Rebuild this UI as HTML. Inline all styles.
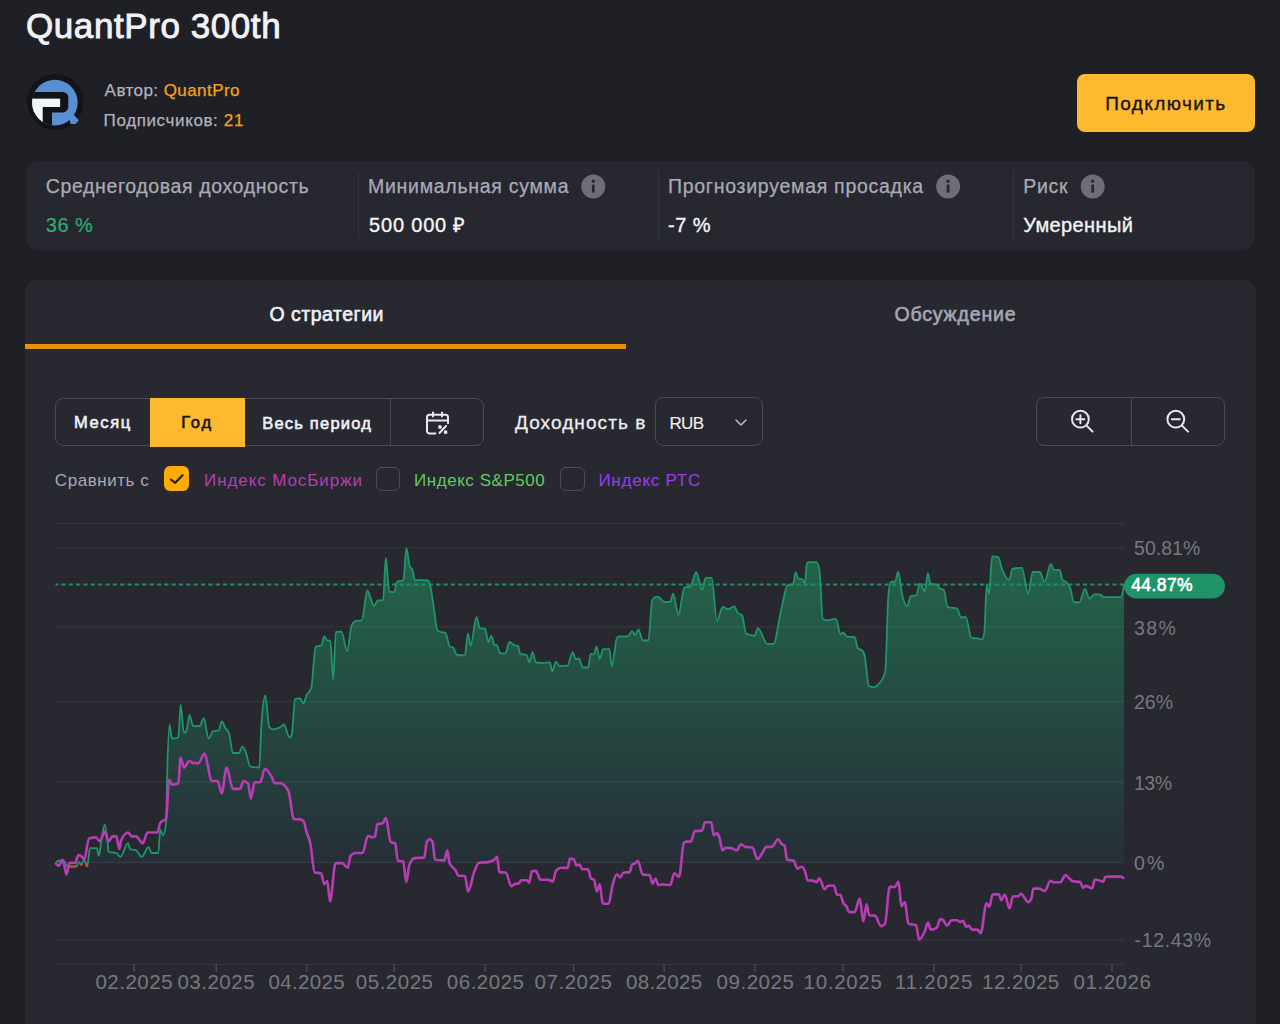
<!DOCTYPE html>
<html><head><meta charset="utf-8">
<style>
html,body{margin:0;padding:0;}
body{width:1280px;height:1024px;overflow:hidden;background:#1f2026;position:relative;font-family:"Liberation Sans",sans-serif;}
.t{position:absolute;white-space:nowrap;line-height:1;}
.abs{position:absolute;}
</style></head><body>
<!-- logo -->
<svg class="abs" style="left:0;top:0" width="110" height="140" viewBox="0 0 110 140">
  <defs><clipPath id="lc"><circle cx="54.85" cy="102.6" r="22.8"/></clipPath></defs>
  <circle cx="55.3" cy="102" r="28.2" fill="#131418"/>
  <g clip-path="url(#lc)">
    <rect x="28" y="76" width="55" height="55" fill="#5a8ed3"/>
    <path d="M28 91.9 H62.6 A5.75 5.75 0 0 1 68.35 97.65 V106.65 A5.75 5.75 0 0 1 62.6 112.4 H52 V132 H42.6 V107.1 H60.1 V98.7 H28 Z" fill="#131418"/>
    <path d="M28 98.7 H60.1 V107.1 H42.6 V132 H28 Z" fill="#f4f4f4"/>
  </g>
  <polygon points="69.5,119 73.8,114.8 78.8,120.2 75.6,124 70.5,124" fill="#5a8ed3"/>
</svg>
<!-- button -->
<div class="abs" style="left:1077px;top:73.5px;width:178px;height:58.5px;border-radius:8px;background:#ffb92e"></div>
<!-- stats card -->
<div class="abs" style="left:25.5px;top:161px;width:1229.5px;height:89px;border-radius:12px;background:#26272f"></div>
<div class="abs" style="left:357.5px;top:172px;width:1px;height:67px;background:#34353e"></div>
<div class="abs" style="left:657.5px;top:172px;width:1px;height:67px;background:#34353e"></div>
<div class="abs" style="left:1012.5px;top:172px;width:1px;height:67px;background:#34353e"></div>
<svg class="abs" style="left:0;top:0" width="1280" height="260">
  <g fill="#6e6e78"><circle cx="593.3" cy="186.6" r="12"/><circle cx="948.1" cy="186.6" r="12"/><circle cx="1092.7" cy="186.6" r="12"/></g>
  <g fill="#26272f">
   <circle cx="593.3" cy="181.2" r="1.6"/><rect x="591.9" y="184.4" width="2.8" height="8.4" rx="1"/>
   <circle cx="948.1" cy="181.2" r="1.6"/><rect x="946.7" y="184.4" width="2.8" height="8.4" rx="1"/>
   <circle cx="1092.7" cy="181.2" r="1.6"/><rect x="1091.3" y="184.4" width="2.8" height="8.4" rx="1"/>
  </g>
</svg>
<!-- main card -->
<div class="abs" style="left:25px;top:280px;width:1230.5px;height:760px;border-radius:12px;background:#272830"></div>
<div class="abs" style="left:25px;top:344px;width:601px;height:5px;background:#e8900c"></div>
<!-- segmented -->
<div class="abs" style="left:55px;top:398px;width:429px;height:48px;border:1px solid #4a4b55;border-radius:8px;box-sizing:border-box"></div>
<div class="abs" style="left:150px;top:398px;width:94.5px;height:49px;background:#ffb92e"></div>
<div class="abs" style="left:390px;top:398px;width:1px;height:48px;background:#4a4b55"></div>
<svg class="abs" style="left:420px;top:405px" width="36" height="36" viewBox="420 405 36 36" fill="none" stroke="#e8e8ee" stroke-width="2" stroke-linecap="round" stroke-linejoin="round">
  <path d="M435.3 433.5 H429.5 a2.5 2.5 0 0 1 -2.5 -2.5 V417.3 a2.5 2.5 0 0 1 2.5 -2.5 H445.5 a2.5 2.5 0 0 1 2.5 2.5 V423.3"/>
  <path d="M433 412.5 V416.5 M442 412.5 V416.5 M427 420.5 H448"/>
  <path d="M439.5 433 L446 426"/>
  <circle cx="440" cy="427" r="0.9" fill="#e8e8ee"/><circle cx="445.6" cy="432.2" r="0.9" fill="#e8e8ee"/>
</svg>
<!-- RUB dropdown -->
<div class="abs" style="left:655px;top:397px;width:108px;height:49px;border:1px solid #4a4b55;border-radius:8px;box-sizing:border-box"></div>
<svg class="abs" style="left:730px;top:412px" width="22" height="20" viewBox="730 412 22 20" fill="none" stroke="#b8b8c0" stroke-width="1.6" stroke-linecap="round" stroke-linejoin="round"><path d="M736 420 L741 425 L746 420"/></svg>
<!-- zoom buttons -->
<div class="abs" style="left:1036px;top:397px;width:189px;height:49px;border:1px solid #4a4b55;border-radius:8px;box-sizing:border-box"></div>
<div class="abs" style="left:1131px;top:397px;width:1px;height:49px;background:#4a4b55"></div>
<svg class="abs" style="left:1060px;top:400px" width="140" height="40" viewBox="1060 400 140 40" fill="none" stroke="#e8e8ee" stroke-width="2" stroke-linecap="round">
  <circle cx="1080.4" cy="419.2" r="8.4"/><path d="M1086.6 425.6 L1092.6 431.6 M1076.4 419.2 H1084.4 M1080.4 415.2 V423.2"/>
  <circle cx="1175.8" cy="419.2" r="8.4"/><path d="M1182 425.6 L1188 431.6 M1171.8 419.2 H1179.8"/>
</svg>
<!-- checkboxes -->
<div class="abs" style="left:164px;top:466px;width:25px;height:25px;border-radius:6px;background:#ffab00"></div>
<svg class="abs" style="left:164px;top:466px" width="25" height="25" viewBox="164 466 25 25" fill="none" stroke="#2a2108" stroke-width="2.2" stroke-linecap="round" stroke-linejoin="round"><path d="M171 479.6 L175.2 482.8 L182.6 475.2"/></svg>
<div class="abs" style="left:375.5px;top:466.5px;width:24.5px;height:24.5px;border:1.6px solid #4d4e57;border-radius:6px;box-sizing:border-box"></div>
<div class="abs" style="left:560px;top:466.5px;width:24.5px;height:24.5px;border:1.6px solid #4d4e57;border-radius:6px;box-sizing:border-box"></div>
<!-- chart -->
<svg class="abs" style="left:0;top:0" width="1280" height="1024">
  <defs>
   <linearGradient id="gf" x1="0" y1="548" x2="0" y2="862.5" gradientUnits="userSpaceOnUse">
     <stop offset="0" stop-color="#23664c"/>
     <stop offset="1" stop-color="#262f37"/>
   </linearGradient>
  </defs>
  <path d="M55.90 861.80 C57.83 861.27 59.77 860.20 61.70 860.20 C62.67 860.20 63.63 860.77 64.60 861.80 C65.60 862.87 66.60 866.60 67.60 866.60 C70.53 866.60 73.47 866.60 76.40 866.60 C77.37 866.60 78.33 861.80 79.30 861.80 C79.93 861.80 80.57 864.70 81.20 864.70 C82.20 864.70 83.20 859.80 84.20 859.80 C85.17 859.80 86.13 866.70 87.10 866.70 C88.07 866.70 89.03 848.10 90.00 848.10 C92.27 848.10 94.53 848.10 96.80 848.10 C97.47 848.10 98.13 855.90 98.80 855.90 C99.77 855.90 100.73 843.54 101.70 838.40 C102.70 833.09 103.70 824.70 104.70 824.70 C105.67 824.70 106.63 833.82 107.60 842.30 C107.93 845.22 108.27 851.91 108.60 852.00 C111.20 852.67 113.80 852.33 116.40 853.00 C117.70 853.33 119.00 856.90 120.30 856.90 C122.90 856.90 125.50 843.20 128.10 843.20 C128.73 843.20 129.37 848.89 130.00 849.10 C131.97 849.77 133.93 849.43 135.90 850.10 C137.83 850.76 139.77 856.90 141.70 856.90 C144.00 856.90 146.30 847.10 148.60 847.10 C149.57 847.10 150.53 853.00 151.50 853.00 C153.77 853.00 156.03 853.00 158.30 853.00 C158.97 853.00 159.63 829.60 160.30 829.60 C161.27 829.60 162.23 835.40 163.20 835.40 C164.17 835.40 165.13 831.17 166.10 822.70 C166.43 819.78 166.77 790.53 167.10 777.80 C167.90 747.24 168.70 724.70 169.50 724.70 C170.33 724.70 171.17 738.80 172.00 738.80 C174.13 738.80 176.27 738.30 178.40 737.30 C179.13 736.96 179.87 704.70 180.60 704.70 C181.73 704.70 182.87 732.80 184.00 732.80 C184.73 732.80 185.47 732.40 186.20 731.60 C187.33 730.36 188.47 714.80 189.60 714.80 C190.73 714.80 191.87 726.00 193.00 726.00 C195.23 726.00 197.47 726.00 199.70 726.00 C201.03 726.00 202.37 718.20 203.70 718.20 C205.37 718.20 207.03 738.40 208.70 738.40 C210.20 738.40 211.70 731.58 213.20 731.20 C215.07 730.73 216.93 730.97 218.80 730.50 C219.77 730.26 220.73 721.50 221.70 721.50 C222.97 721.50 224.23 726.34 225.50 728.30 C226.63 730.05 227.77 729.80 228.90 732.80 C230.23 736.33 231.57 753.00 232.90 753.00 C234.93 753.00 236.97 753.00 239.00 753.00 C240.13 753.00 241.27 746.70 242.40 746.70 C243.50 746.70 244.60 749.31 245.70 751.80 C247.20 755.20 248.70 766.00 250.20 766.40 C253.20 767.20 256.20 767.60 259.20 767.60 C259.93 767.60 260.67 736.01 261.40 724.90 C262.70 705.21 264.00 695.30 265.30 695.30 C266.63 695.30 267.97 725.74 269.30 727.10 C270.80 728.63 272.30 729.40 273.80 729.40 C276.03 729.40 278.27 728.49 280.50 727.10 C281.63 726.39 282.77 724.50 283.90 724.50 C285.77 724.50 287.63 737.30 289.50 737.30 C290.23 737.30 290.97 736.53 291.70 735.00 C292.83 732.63 293.97 699.47 295.10 699.10 C296.73 698.57 298.37 698.30 300.00 698.30 C301.13 698.30 302.27 703.40 303.40 703.40 C304.50 703.40 305.60 697.23 306.70 694.90 C308.20 691.73 309.70 692.67 311.20 688.20 C312.70 683.73 314.20 647.19 315.70 646.60 C317.57 645.87 319.43 646.23 321.30 645.50 C322.27 645.12 323.23 636.50 324.20 636.50 C325.10 636.50 326.00 639.32 326.90 639.90 C328.03 640.63 329.17 640.27 330.30 641.00 C331.27 641.63 332.23 679.20 333.20 679.20 C334.10 679.20 335.00 632.13 335.90 632.00 C337.77 631.73 339.63 631.60 341.50 631.60 C343.37 631.60 345.23 651.10 347.10 651.10 C348.60 651.10 350.10 628.30 351.60 625.30 C353.10 622.30 354.60 621.01 356.10 620.80 C357.97 620.53 359.83 620.67 361.70 620.40 C363.60 620.13 365.50 590.50 367.40 590.50 C368.50 590.50 369.60 595.82 370.70 598.40 C371.83 601.06 372.97 606.20 374.10 606.20 C375.23 606.20 376.37 600.76 377.50 600.60 C379.37 600.33 381.23 600.47 383.10 600.20 C384.00 600.07 384.90 558.00 385.80 558.00 C387.00 558.00 388.20 591.36 389.40 591.60 C391.03 591.93 392.67 592.10 394.30 592.10 C395.20 592.10 396.10 581.81 397.00 581.50 C399.10 580.77 401.20 581.13 403.30 580.40 C404.33 580.04 405.37 548.50 406.40 548.50 C407.60 548.50 408.80 564.50 410.00 566.90 C410.77 568.43 411.53 567.67 412.30 569.20 C413.20 571.00 414.10 579.94 415.00 580.00 C419.33 580.27 423.67 580.13 428.00 580.40 C428.57 580.43 429.13 581.64 429.70 583.40 C430.73 586.61 431.77 594.55 432.80 600.60 C434.37 609.77 435.93 628.68 437.50 630.30 C438.53 631.37 439.57 631.55 440.60 631.90 C442.17 632.43 443.73 632.17 445.30 632.70 C446.87 633.23 448.43 645.89 450.00 646.70 C451.03 647.23 452.07 646.97 453.10 647.50 C454.40 648.17 455.70 654.90 457.00 655.00 C459.60 655.20 462.20 655.30 464.80 655.30 C465.87 655.30 466.93 633.40 468.00 633.40 C468.87 633.40 469.73 645.90 470.60 645.90 C472.60 645.90 474.60 617.00 476.60 617.00 C477.63 617.00 478.67 627.70 479.70 628.00 C481.53 628.53 483.37 628.27 485.20 628.80 C486.23 629.10 487.27 642.00 488.30 642.00 C489.33 642.00 490.37 635.80 491.40 635.80 C492.43 635.80 493.47 645.20 494.50 645.20 C495.30 645.20 496.10 645.20 496.90 645.20 C497.93 645.20 498.97 653.40 500.00 653.40 C501.83 653.40 503.67 653.40 505.50 653.40 C506.80 653.40 508.10 642.00 509.40 642.00 C510.97 642.00 512.53 644.64 514.10 645.20 C515.40 645.67 516.70 645.43 518.00 645.90 C518.77 646.18 519.53 653.51 520.30 653.80 C522.40 654.60 524.50 654.20 526.60 655.00 C527.53 655.36 528.47 662.30 529.40 662.30 C530.43 662.30 531.47 652.20 532.50 652.20 C533.63 652.20 534.77 662.12 535.90 662.30 C538.00 662.63 540.10 662.80 542.20 662.80 C544.80 662.80 547.40 662.30 550.00 662.30 C550.77 662.30 551.53 671.50 552.30 671.50 C553.50 671.50 554.70 661.60 555.90 661.60 C557.07 661.60 558.23 665.90 559.40 665.90 C562.00 665.90 564.60 665.90 567.20 665.90 C569.03 665.90 570.87 652.20 572.70 652.20 C573.73 652.20 574.77 659.20 575.80 659.20 C576.83 659.20 577.87 658.40 578.90 658.40 C580.20 658.40 581.50 667.50 582.80 667.50 C584.63 667.50 586.47 667.50 588.30 667.50 C589.07 667.50 589.83 653.80 590.60 653.80 C591.67 653.80 592.73 654.50 593.80 654.50 C594.73 654.50 595.67 646.70 596.60 646.70 C597.63 646.70 598.67 659.20 599.70 659.20 C600.83 659.20 601.97 649.10 603.10 649.10 C605.20 649.10 607.30 649.10 609.40 649.10 C610.17 649.10 610.93 666.30 611.70 666.30 C613.53 666.30 615.37 638.48 617.20 637.30 C618.23 636.63 619.27 636.30 620.30 636.30 C622.90 636.30 625.50 636.30 628.10 636.30 C629.40 636.30 630.70 631.10 632.00 631.10 C633.07 631.10 634.13 635.00 635.20 635.00 C636.23 635.00 637.27 629.50 638.30 629.50 C639.87 629.50 641.43 640.50 643.00 640.50 C644.80 640.50 646.60 640.50 648.40 640.50 C649.70 640.50 651.00 601.51 652.30 599.80 C653.87 597.73 655.43 596.70 657.00 596.70 C658.07 596.70 659.13 597.56 660.20 598.30 C661.50 599.20 662.80 601.90 664.10 601.90 C666.17 601.90 668.23 601.90 670.30 601.90 C671.23 601.90 672.17 593.60 673.10 593.60 C674.87 593.60 676.63 614.80 678.40 614.80 C680.40 614.80 682.40 588.27 684.40 587.50 C686.47 586.70 688.53 587.10 690.60 586.30 C692.43 585.59 694.27 572.20 696.10 572.20 C698.17 572.20 700.23 589.80 702.30 589.80 C703.37 589.80 704.43 577.80 705.50 577.80 C707.57 577.80 709.63 577.80 711.70 577.80 C713.43 577.80 715.17 621.10 716.90 621.10 C718.83 621.10 720.77 607.00 722.70 607.00 C724.50 607.00 726.30 609.10 728.10 609.10 C730.20 609.10 732.30 606.30 734.40 606.30 C735.43 606.30 736.47 611.14 737.50 612.50 C739.07 614.57 740.63 613.53 742.20 615.60 C743.50 617.31 744.80 633.00 746.10 633.60 C748.97 634.93 751.83 635.60 754.70 635.60 C755.73 635.60 756.77 628.10 757.80 628.10 C760.93 628.10 764.07 643.80 767.20 643.80 C769.27 643.80 771.33 643.80 773.40 643.80 C776.03 643.80 778.67 620.20 781.30 609.40 C783.37 600.92 785.43 585.80 787.50 585.20 C789.33 584.67 791.17 584.93 793.00 584.40 C793.87 584.15 794.73 572.20 795.60 572.20 C796.53 572.20 797.47 578.90 798.40 578.90 C799.57 578.90 800.73 578.90 801.90 578.90 C802.83 578.90 803.77 583.60 804.70 583.60 C805.47 583.60 806.23 564.00 807.00 563.30 C807.80 562.57 808.60 562.20 809.40 562.20 C811.73 562.20 814.07 562.20 816.40 562.20 C817.43 562.20 818.47 564.90 819.50 570.30 C820.57 575.87 821.63 617.98 822.70 618.80 C824.00 619.80 825.30 620.30 826.60 620.30 C829.70 620.30 832.80 618.80 835.90 618.80 C837.47 618.80 839.03 634.40 840.60 634.40 C841.40 634.40 842.20 632.50 843.00 632.50 C844.30 632.50 845.60 636.53 846.90 636.70 C849.50 637.03 852.10 636.87 854.70 637.20 C855.73 637.33 856.77 646.91 857.80 648.10 C859.37 649.90 860.93 649.00 862.50 650.80 C863.27 651.68 864.03 653.06 864.80 656.30 C866.13 661.93 867.47 685.15 868.80 685.90 C870.33 686.77 871.87 687.20 873.40 687.20 C875.50 687.20 877.60 685.71 879.70 682.80 C881.53 680.26 883.37 679.17 885.20 671.90 C886.23 667.80 887.27 610.29 888.30 596.90 C889.07 586.97 889.83 582.23 890.60 582.00 C892.17 581.53 893.73 581.77 895.30 581.30 C896.23 581.02 897.17 571.90 898.10 571.90 C899.50 571.90 900.90 589.63 902.30 595.30 C903.87 601.64 905.43 606.30 907.00 606.30 C908.30 606.30 909.60 596.48 910.90 596.10 C912.73 595.57 914.57 595.83 916.40 595.30 C917.43 595.00 918.47 583.60 919.50 583.60 C921.33 583.60 923.17 590.90 925.00 590.90 C925.93 590.90 926.87 573.10 927.80 573.10 C928.70 573.10 929.60 583.53 930.50 583.75 C932.57 584.25 934.63 584.00 936.70 584.50 C937.73 584.75 938.77 587.72 939.80 588.40 C941.12 589.27 942.43 588.83 943.75 589.70 C945.07 590.57 946.38 606.86 947.70 607.20 C950.80 608.00 953.90 607.60 957.00 608.40 C958.30 608.74 959.60 617.30 960.90 617.30 C962.47 617.30 964.03 616.90 965.60 616.90 C967.60 616.90 969.60 637.92 971.60 638.10 C973.77 638.30 975.93 638.20 978.10 638.40 C979.40 638.52 980.70 639.70 982.00 639.70 C982.80 639.70 983.60 637.20 984.40 632.20 C985.17 627.41 985.93 584.50 986.70 584.50 C987.50 584.50 988.30 593.90 989.10 593.90 C990.13 593.90 991.17 556.40 992.20 556.40 C994.27 556.40 996.33 556.67 998.40 557.20 C999.47 557.48 1000.53 564.81 1001.60 567.80 C1004.10 574.80 1006.60 579.80 1009.10 579.80 C1010.23 579.80 1011.37 569.17 1012.50 568.90 C1015.63 568.17 1018.77 567.80 1021.90 567.80 C1023.97 567.80 1026.03 593.90 1028.10 593.90 C1029.67 593.90 1031.23 572.00 1032.80 572.00 C1035.13 572.00 1037.47 572.00 1039.80 572.00 C1041.37 572.00 1042.93 581.90 1044.50 581.90 C1046.63 581.90 1048.77 563.90 1050.90 563.90 C1051.87 563.90 1052.83 569.80 1053.80 569.80 C1055.73 569.80 1057.67 569.80 1059.60 569.80 C1060.60 569.80 1061.60 578.82 1062.60 580.00 C1063.73 581.33 1064.87 580.86 1066.00 582.00 C1067.47 583.47 1068.93 584.60 1070.40 588.80 C1071.53 592.05 1072.67 601.79 1073.80 602.00 C1075.60 602.33 1077.40 602.50 1079.20 602.50 C1081.13 602.50 1083.07 588.80 1085.00 588.80 C1086.47 588.80 1087.93 598.60 1089.40 598.60 C1091.20 598.60 1093.00 594.20 1094.80 594.20 C1096.77 594.20 1098.73 594.37 1100.70 594.70 C1101.67 594.86 1102.63 597.10 1103.60 597.10 C1109.47 597.10 1115.33 597.10 1121.20 597.10 C1122.17 597.10 1123.13 589.03 1124.10 585.00 L1124.1 862.5 L55.9 862.5 Z" fill="url(#gf)"/>
  <g stroke="#ffffff" stroke-opacity="0.065" stroke-width="1.3"><line x1="55.5" x2="1124" y1="523.3" y2="523.3" /><line x1="55.5" x2="1124" y1="547.7" y2="547.7" /><line x1="55.5" x2="1124" y1="626.8" y2="626.8" /><line x1="55.5" x2="1124" y1="701.6" y2="701.6" /><line x1="55.5" x2="1124" y1="782.2" y2="782.2" /><line x1="55.5" x2="1124" y1="862.5" y2="862.5" /><line x1="55.5" x2="1124" y1="939.8" y2="939.8" /><line x1="55.5" x2="1124" y1="964.3" y2="964.3"/></g><g stroke="#4b4c55" stroke-width="1.3"><line x1="134.2" x2="134.2" y1="964" y2="972" /><line x1="216.2" x2="216.2" y1="964" y2="972" /><line x1="306.7" x2="306.7" y1="964" y2="972" /><line x1="394.3" x2="394.3" y1="964" y2="972" /><line x1="485.3" x2="485.3" y1="964" y2="972" /><line x1="573.5" x2="573.5" y1="964" y2="972" /><line x1="664.1" x2="664.1" y1="964" y2="972" /><line x1="755.0" x2="755.0" y1="964" y2="972" /><line x1="843.0" x2="843.0" y1="964" y2="972" /><line x1="933.8" x2="933.8" y1="964" y2="972" /><line x1="1021.1" x2="1021.1" y1="964" y2="972" /><line x1="1112.0" x2="1112.0" y1="964" y2="972" /></g>
  <line x1="55.5" x2="1124" y1="584.6" y2="584.6" stroke="#1f8e64" stroke-width="2" stroke-dasharray="4.3 3.05" stroke-dashoffset="1.6"/>
  <path d="M55.90 861.80 C57.83 861.27 59.77 860.20 61.70 860.20 C62.67 860.20 63.63 860.77 64.60 861.80 C65.60 862.87 66.60 866.60 67.60 866.60 C70.53 866.60 73.47 866.60 76.40 866.60 C77.37 866.60 78.33 861.80 79.30 861.80 C79.93 861.80 80.57 864.70 81.20 864.70 C82.20 864.70 83.20 859.80 84.20 859.80 C85.17 859.80 86.13 866.70 87.10 866.70 C88.07 866.70 89.03 848.10 90.00 848.10 C92.27 848.10 94.53 848.10 96.80 848.10 C97.47 848.10 98.13 855.90 98.80 855.90 C99.77 855.90 100.73 843.54 101.70 838.40 C102.70 833.09 103.70 824.70 104.70 824.70 C105.67 824.70 106.63 833.82 107.60 842.30 C107.93 845.22 108.27 851.91 108.60 852.00 C111.20 852.67 113.80 852.33 116.40 853.00 C117.70 853.33 119.00 856.90 120.30 856.90 C122.90 856.90 125.50 843.20 128.10 843.20 C128.73 843.20 129.37 848.89 130.00 849.10 C131.97 849.77 133.93 849.43 135.90 850.10 C137.83 850.76 139.77 856.90 141.70 856.90 C144.00 856.90 146.30 847.10 148.60 847.10 C149.57 847.10 150.53 853.00 151.50 853.00 C153.77 853.00 156.03 853.00 158.30 853.00 C158.97 853.00 159.63 829.60 160.30 829.60 C161.27 829.60 162.23 835.40 163.20 835.40 C164.17 835.40 165.13 831.17 166.10 822.70 C166.43 819.78 166.77 790.53 167.10 777.80 C167.90 747.24 168.70 724.70 169.50 724.70 C170.33 724.70 171.17 738.80 172.00 738.80 C174.13 738.80 176.27 738.30 178.40 737.30 C179.13 736.96 179.87 704.70 180.60 704.70 C181.73 704.70 182.87 732.80 184.00 732.80 C184.73 732.80 185.47 732.40 186.20 731.60 C187.33 730.36 188.47 714.80 189.60 714.80 C190.73 714.80 191.87 726.00 193.00 726.00 C195.23 726.00 197.47 726.00 199.70 726.00 C201.03 726.00 202.37 718.20 203.70 718.20 C205.37 718.20 207.03 738.40 208.70 738.40 C210.20 738.40 211.70 731.58 213.20 731.20 C215.07 730.73 216.93 730.97 218.80 730.50 C219.77 730.26 220.73 721.50 221.70 721.50 C222.97 721.50 224.23 726.34 225.50 728.30 C226.63 730.05 227.77 729.80 228.90 732.80 C230.23 736.33 231.57 753.00 232.90 753.00 C234.93 753.00 236.97 753.00 239.00 753.00 C240.13 753.00 241.27 746.70 242.40 746.70 C243.50 746.70 244.60 749.31 245.70 751.80 C247.20 755.20 248.70 766.00 250.20 766.40 C253.20 767.20 256.20 767.60 259.20 767.60 C259.93 767.60 260.67 736.01 261.40 724.90 C262.70 705.21 264.00 695.30 265.30 695.30 C266.63 695.30 267.97 725.74 269.30 727.10 C270.80 728.63 272.30 729.40 273.80 729.40 C276.03 729.40 278.27 728.49 280.50 727.10 C281.63 726.39 282.77 724.50 283.90 724.50 C285.77 724.50 287.63 737.30 289.50 737.30 C290.23 737.30 290.97 736.53 291.70 735.00 C292.83 732.63 293.97 699.47 295.10 699.10 C296.73 698.57 298.37 698.30 300.00 698.30 C301.13 698.30 302.27 703.40 303.40 703.40 C304.50 703.40 305.60 697.23 306.70 694.90 C308.20 691.73 309.70 692.67 311.20 688.20 C312.70 683.73 314.20 647.19 315.70 646.60 C317.57 645.87 319.43 646.23 321.30 645.50 C322.27 645.12 323.23 636.50 324.20 636.50 C325.10 636.50 326.00 639.32 326.90 639.90 C328.03 640.63 329.17 640.27 330.30 641.00 C331.27 641.63 332.23 679.20 333.20 679.20 C334.10 679.20 335.00 632.13 335.90 632.00 C337.77 631.73 339.63 631.60 341.50 631.60 C343.37 631.60 345.23 651.10 347.10 651.10 C348.60 651.10 350.10 628.30 351.60 625.30 C353.10 622.30 354.60 621.01 356.10 620.80 C357.97 620.53 359.83 620.67 361.70 620.40 C363.60 620.13 365.50 590.50 367.40 590.50 C368.50 590.50 369.60 595.82 370.70 598.40 C371.83 601.06 372.97 606.20 374.10 606.20 C375.23 606.20 376.37 600.76 377.50 600.60 C379.37 600.33 381.23 600.47 383.10 600.20 C384.00 600.07 384.90 558.00 385.80 558.00 C387.00 558.00 388.20 591.36 389.40 591.60 C391.03 591.93 392.67 592.10 394.30 592.10 C395.20 592.10 396.10 581.81 397.00 581.50 C399.10 580.77 401.20 581.13 403.30 580.40 C404.33 580.04 405.37 548.50 406.40 548.50 C407.60 548.50 408.80 564.50 410.00 566.90 C410.77 568.43 411.53 567.67 412.30 569.20 C413.20 571.00 414.10 579.94 415.00 580.00 C419.33 580.27 423.67 580.13 428.00 580.40 C428.57 580.43 429.13 581.64 429.70 583.40 C430.73 586.61 431.77 594.55 432.80 600.60 C434.37 609.77 435.93 628.68 437.50 630.30 C438.53 631.37 439.57 631.55 440.60 631.90 C442.17 632.43 443.73 632.17 445.30 632.70 C446.87 633.23 448.43 645.89 450.00 646.70 C451.03 647.23 452.07 646.97 453.10 647.50 C454.40 648.17 455.70 654.90 457.00 655.00 C459.60 655.20 462.20 655.30 464.80 655.30 C465.87 655.30 466.93 633.40 468.00 633.40 C468.87 633.40 469.73 645.90 470.60 645.90 C472.60 645.90 474.60 617.00 476.60 617.00 C477.63 617.00 478.67 627.70 479.70 628.00 C481.53 628.53 483.37 628.27 485.20 628.80 C486.23 629.10 487.27 642.00 488.30 642.00 C489.33 642.00 490.37 635.80 491.40 635.80 C492.43 635.80 493.47 645.20 494.50 645.20 C495.30 645.20 496.10 645.20 496.90 645.20 C497.93 645.20 498.97 653.40 500.00 653.40 C501.83 653.40 503.67 653.40 505.50 653.40 C506.80 653.40 508.10 642.00 509.40 642.00 C510.97 642.00 512.53 644.64 514.10 645.20 C515.40 645.67 516.70 645.43 518.00 645.90 C518.77 646.18 519.53 653.51 520.30 653.80 C522.40 654.60 524.50 654.20 526.60 655.00 C527.53 655.36 528.47 662.30 529.40 662.30 C530.43 662.30 531.47 652.20 532.50 652.20 C533.63 652.20 534.77 662.12 535.90 662.30 C538.00 662.63 540.10 662.80 542.20 662.80 C544.80 662.80 547.40 662.30 550.00 662.30 C550.77 662.30 551.53 671.50 552.30 671.50 C553.50 671.50 554.70 661.60 555.90 661.60 C557.07 661.60 558.23 665.90 559.40 665.90 C562.00 665.90 564.60 665.90 567.20 665.90 C569.03 665.90 570.87 652.20 572.70 652.20 C573.73 652.20 574.77 659.20 575.80 659.20 C576.83 659.20 577.87 658.40 578.90 658.40 C580.20 658.40 581.50 667.50 582.80 667.50 C584.63 667.50 586.47 667.50 588.30 667.50 C589.07 667.50 589.83 653.80 590.60 653.80 C591.67 653.80 592.73 654.50 593.80 654.50 C594.73 654.50 595.67 646.70 596.60 646.70 C597.63 646.70 598.67 659.20 599.70 659.20 C600.83 659.20 601.97 649.10 603.10 649.10 C605.20 649.10 607.30 649.10 609.40 649.10 C610.17 649.10 610.93 666.30 611.70 666.30 C613.53 666.30 615.37 638.48 617.20 637.30 C618.23 636.63 619.27 636.30 620.30 636.30 C622.90 636.30 625.50 636.30 628.10 636.30 C629.40 636.30 630.70 631.10 632.00 631.10 C633.07 631.10 634.13 635.00 635.20 635.00 C636.23 635.00 637.27 629.50 638.30 629.50 C639.87 629.50 641.43 640.50 643.00 640.50 C644.80 640.50 646.60 640.50 648.40 640.50 C649.70 640.50 651.00 601.51 652.30 599.80 C653.87 597.73 655.43 596.70 657.00 596.70 C658.07 596.70 659.13 597.56 660.20 598.30 C661.50 599.20 662.80 601.90 664.10 601.90 C666.17 601.90 668.23 601.90 670.30 601.90 C671.23 601.90 672.17 593.60 673.10 593.60 C674.87 593.60 676.63 614.80 678.40 614.80 C680.40 614.80 682.40 588.27 684.40 587.50 C686.47 586.70 688.53 587.10 690.60 586.30 C692.43 585.59 694.27 572.20 696.10 572.20 C698.17 572.20 700.23 589.80 702.30 589.80 C703.37 589.80 704.43 577.80 705.50 577.80 C707.57 577.80 709.63 577.80 711.70 577.80 C713.43 577.80 715.17 621.10 716.90 621.10 C718.83 621.10 720.77 607.00 722.70 607.00 C724.50 607.00 726.30 609.10 728.10 609.10 C730.20 609.10 732.30 606.30 734.40 606.30 C735.43 606.30 736.47 611.14 737.50 612.50 C739.07 614.57 740.63 613.53 742.20 615.60 C743.50 617.31 744.80 633.00 746.10 633.60 C748.97 634.93 751.83 635.60 754.70 635.60 C755.73 635.60 756.77 628.10 757.80 628.10 C760.93 628.10 764.07 643.80 767.20 643.80 C769.27 643.80 771.33 643.80 773.40 643.80 C776.03 643.80 778.67 620.20 781.30 609.40 C783.37 600.92 785.43 585.80 787.50 585.20 C789.33 584.67 791.17 584.93 793.00 584.40 C793.87 584.15 794.73 572.20 795.60 572.20 C796.53 572.20 797.47 578.90 798.40 578.90 C799.57 578.90 800.73 578.90 801.90 578.90 C802.83 578.90 803.77 583.60 804.70 583.60 C805.47 583.60 806.23 564.00 807.00 563.30 C807.80 562.57 808.60 562.20 809.40 562.20 C811.73 562.20 814.07 562.20 816.40 562.20 C817.43 562.20 818.47 564.90 819.50 570.30 C820.57 575.87 821.63 617.98 822.70 618.80 C824.00 619.80 825.30 620.30 826.60 620.30 C829.70 620.30 832.80 618.80 835.90 618.80 C837.47 618.80 839.03 634.40 840.60 634.40 C841.40 634.40 842.20 632.50 843.00 632.50 C844.30 632.50 845.60 636.53 846.90 636.70 C849.50 637.03 852.10 636.87 854.70 637.20 C855.73 637.33 856.77 646.91 857.80 648.10 C859.37 649.90 860.93 649.00 862.50 650.80 C863.27 651.68 864.03 653.06 864.80 656.30 C866.13 661.93 867.47 685.15 868.80 685.90 C870.33 686.77 871.87 687.20 873.40 687.20 C875.50 687.20 877.60 685.71 879.70 682.80 C881.53 680.26 883.37 679.17 885.20 671.90 C886.23 667.80 887.27 610.29 888.30 596.90 C889.07 586.97 889.83 582.23 890.60 582.00 C892.17 581.53 893.73 581.77 895.30 581.30 C896.23 581.02 897.17 571.90 898.10 571.90 C899.50 571.90 900.90 589.63 902.30 595.30 C903.87 601.64 905.43 606.30 907.00 606.30 C908.30 606.30 909.60 596.48 910.90 596.10 C912.73 595.57 914.57 595.83 916.40 595.30 C917.43 595.00 918.47 583.60 919.50 583.60 C921.33 583.60 923.17 590.90 925.00 590.90 C925.93 590.90 926.87 573.10 927.80 573.10 C928.70 573.10 929.60 583.53 930.50 583.75 C932.57 584.25 934.63 584.00 936.70 584.50 C937.73 584.75 938.77 587.72 939.80 588.40 C941.12 589.27 942.43 588.83 943.75 589.70 C945.07 590.57 946.38 606.86 947.70 607.20 C950.80 608.00 953.90 607.60 957.00 608.40 C958.30 608.74 959.60 617.30 960.90 617.30 C962.47 617.30 964.03 616.90 965.60 616.90 C967.60 616.90 969.60 637.92 971.60 638.10 C973.77 638.30 975.93 638.20 978.10 638.40 C979.40 638.52 980.70 639.70 982.00 639.70 C982.80 639.70 983.60 637.20 984.40 632.20 C985.17 627.41 985.93 584.50 986.70 584.50 C987.50 584.50 988.30 593.90 989.10 593.90 C990.13 593.90 991.17 556.40 992.20 556.40 C994.27 556.40 996.33 556.67 998.40 557.20 C999.47 557.48 1000.53 564.81 1001.60 567.80 C1004.10 574.80 1006.60 579.80 1009.10 579.80 C1010.23 579.80 1011.37 569.17 1012.50 568.90 C1015.63 568.17 1018.77 567.80 1021.90 567.80 C1023.97 567.80 1026.03 593.90 1028.10 593.90 C1029.67 593.90 1031.23 572.00 1032.80 572.00 C1035.13 572.00 1037.47 572.00 1039.80 572.00 C1041.37 572.00 1042.93 581.90 1044.50 581.90 C1046.63 581.90 1048.77 563.90 1050.90 563.90 C1051.87 563.90 1052.83 569.80 1053.80 569.80 C1055.73 569.80 1057.67 569.80 1059.60 569.80 C1060.60 569.80 1061.60 578.82 1062.60 580.00 C1063.73 581.33 1064.87 580.86 1066.00 582.00 C1067.47 583.47 1068.93 584.60 1070.40 588.80 C1071.53 592.05 1072.67 601.79 1073.80 602.00 C1075.60 602.33 1077.40 602.50 1079.20 602.50 C1081.13 602.50 1083.07 588.80 1085.00 588.80 C1086.47 588.80 1087.93 598.60 1089.40 598.60 C1091.20 598.60 1093.00 594.20 1094.80 594.20 C1096.77 594.20 1098.73 594.37 1100.70 594.70 C1101.67 594.86 1102.63 597.10 1103.60 597.10 C1109.47 597.10 1115.33 597.10 1121.20 597.10 C1122.17 597.10 1123.13 589.03 1124.10 585.00" fill="none" stroke="#1f966a" stroke-width="1.8" stroke-linejoin="round"/>
  <g stroke="#e0443c" stroke-width="2"><path d="M67.6 866.6 L76.4 866.6 M80.2 863.5 L82 865.5 M86 863 L87.5 866.5"/></g>
  <path d="M55.90 863.70 C56.87 864.37 57.83 865.70 58.80 865.70 C60.10 865.70 61.40 859.80 62.70 859.80 C64.00 859.80 65.30 874.50 66.60 874.50 C67.57 874.50 68.53 862.80 69.50 862.80 C71.47 862.80 73.43 862.80 75.40 862.80 C76.37 862.80 77.33 855.00 78.30 855.00 C79.60 855.00 80.90 855.63 82.20 856.90 C82.87 857.55 83.53 859.80 84.20 859.80 C85.80 859.80 87.40 838.86 89.00 838.40 C91.30 837.73 93.60 837.40 95.90 837.40 C97.20 837.40 98.50 841.30 99.80 841.30 C101.43 841.30 103.07 831.50 104.70 831.50 C106.00 831.50 107.30 841.30 108.60 841.30 C109.90 841.30 111.20 836.40 112.50 836.40 C113.80 836.40 115.10 836.40 116.40 836.40 C117.37 836.40 118.33 849.10 119.30 849.10 C119.93 849.10 120.57 841.73 121.20 840.30 C123.50 835.10 125.80 832.50 128.10 832.50 C129.40 832.50 130.70 836.40 132.00 836.40 C133.30 836.40 134.60 836.40 135.90 836.40 C138.17 836.40 140.43 843.20 142.70 843.20 C144.33 843.20 145.97 832.50 147.60 832.50 C150.87 832.50 154.13 832.50 157.40 832.50 C158.37 832.50 159.33 824.00 160.30 822.70 C162.23 820.10 164.17 821.40 166.10 818.80 C167.10 817.46 168.10 779.80 169.10 779.80 C170.07 779.80 171.03 784.70 172.00 784.70 C174.13 784.70 176.27 784.23 178.40 783.30 C179.13 782.98 179.87 757.50 180.60 757.50 C181.73 757.50 182.87 767.60 184.00 767.60 C185.87 767.60 187.73 760.80 189.60 760.80 C190.73 760.80 191.87 763.10 193.00 763.10 C194.87 763.10 196.73 763.10 198.60 763.10 C200.47 763.10 202.33 753.60 204.20 753.60 C206.80 753.60 209.40 781.00 212.00 781.00 C213.90 781.00 215.80 781.00 217.70 781.00 C219.03 781.00 220.37 793.40 221.70 793.40 C223.33 793.40 224.97 767.60 226.60 767.60 C228.70 767.60 230.80 788.90 232.90 788.90 C235.30 788.90 237.70 788.90 240.10 788.90 C241.23 788.90 242.37 781.00 243.50 781.00 C245.00 781.00 246.50 781.77 248.00 783.30 C248.97 784.29 249.93 798.50 250.90 798.50 C252.17 798.50 253.43 782.20 254.70 782.20 C256.57 782.20 258.43 782.20 260.30 782.20 C261.80 782.20 263.30 768.70 264.80 768.70 C267.03 768.70 269.27 772.66 271.50 776.50 C272.63 778.45 273.77 783.30 274.90 783.30 C276.77 783.30 278.63 783.30 280.50 783.30 C283.13 783.30 285.77 785.90 288.40 791.10 C290.27 794.79 292.13 819.08 294.00 819.20 C296.00 819.33 298.00 819.27 300.00 819.40 C301.30 819.49 302.60 820.17 303.90 821.70 C304.70 822.64 305.50 828.25 306.30 831.10 C307.60 835.74 308.90 836.84 310.20 842.80 C311.73 849.83 313.27 872.11 314.80 872.50 C316.90 873.03 319.00 872.77 321.10 873.30 C322.13 873.56 323.17 884.20 324.20 884.20 C325.23 884.20 326.27 881.10 327.30 881.10 C328.20 881.10 329.10 901.40 330.00 901.40 C331.87 901.40 333.73 863.10 335.60 863.10 C337.80 863.10 340.00 863.10 342.20 863.10 C344.03 863.10 345.87 867.80 347.70 867.80 C348.73 867.80 349.77 856.31 350.80 855.30 C352.37 853.77 353.93 853.00 355.50 853.00 C357.83 853.00 360.17 853.00 362.50 853.00 C364.33 853.00 366.17 835.80 368.00 835.80 C369.30 835.80 370.60 837.30 371.90 837.30 C372.93 837.30 373.97 837.07 375.00 836.60 C375.77 836.25 376.53 824.32 377.30 824.10 C379.13 823.57 380.97 823.83 382.80 823.30 C383.83 823.00 384.87 817.80 385.90 817.80 C387.47 817.80 389.03 840.93 390.60 842.00 C392.17 843.07 393.73 842.53 395.30 843.60 C396.10 844.14 396.90 860.65 397.70 860.80 C399.50 861.13 401.30 860.97 403.10 861.30 C404.17 861.50 405.23 881.90 406.30 881.90 C407.33 881.90 408.37 867.23 409.40 864.70 C411.20 860.30 413.00 858.25 414.80 858.10 C417.93 857.83 421.07 857.97 424.20 857.70 C425.07 857.63 425.93 843.93 426.80 842.20 C427.77 840.27 428.73 839.30 429.70 839.30 C430.67 839.30 431.63 840.27 432.60 842.20 C433.40 843.80 434.20 859.70 435.00 859.80 C438.10 860.20 441.20 860.40 444.30 860.40 C445.30 860.40 446.30 850.40 447.30 850.40 C448.07 850.40 448.83 861.48 449.60 863.30 C451.57 867.97 453.53 867.12 455.50 870.30 C456.47 871.86 457.43 875.48 458.40 875.60 C460.57 875.87 462.73 875.73 464.90 876.00 C465.97 876.13 467.03 891.40 468.10 891.40 C470.13 891.40 472.17 877.20 474.20 872.10 C475.77 868.17 477.33 862.90 478.90 862.70 C482.03 862.30 485.17 862.50 488.30 862.10 C490.27 861.85 492.23 861.33 494.20 859.80 C495.17 859.05 496.13 856.90 497.10 856.90 C497.87 856.90 498.63 871.96 499.40 872.10 C501.57 872.50 503.73 872.30 505.90 872.70 C507.67 873.03 509.43 886.20 511.20 886.20 C512.57 886.20 513.93 884.03 515.30 883.80 C516.47 883.60 517.63 883.70 518.80 883.50 C519.57 883.37 520.33 880.30 521.10 880.30 C523.07 880.30 525.03 880.30 527.00 880.30 C527.77 880.30 528.53 882.60 529.30 882.60 C530.10 882.60 530.90 871.73 531.70 871.50 C533.07 871.10 534.43 870.90 535.80 870.90 C537.37 870.90 538.93 879.70 540.50 879.70 C543.03 879.70 545.57 879.70 548.10 879.70 C549.70 879.70 551.30 881.50 552.90 881.50 C553.90 881.50 554.90 872.09 555.90 870.90 C557.63 868.83 559.37 867.80 561.10 867.80 C563.27 867.80 565.43 868.00 567.60 868.00 C568.37 868.00 569.13 858.60 569.90 858.60 C571.27 858.60 572.63 858.80 574.00 859.20 C574.80 859.43 575.60 865.60 576.40 865.60 C577.37 865.60 578.33 864.50 579.30 864.50 C580.27 864.50 581.23 869.20 582.20 869.20 C584.17 869.20 586.13 869.20 588.10 869.20 C589.07 869.20 590.03 877.86 591.00 878.50 C592.00 879.17 593.00 878.83 594.00 879.50 C594.97 880.14 595.93 891.40 596.90 891.40 C597.87 891.40 598.83 884.40 599.80 884.40 C600.80 884.40 601.80 903.80 602.80 903.80 C604.73 903.80 606.67 903.80 608.60 903.80 C609.97 903.80 611.33 889.30 612.70 884.40 C614.07 879.50 615.43 874.40 616.80 874.40 C617.97 874.40 619.13 877.40 620.30 877.40 C621.30 877.40 622.30 872.89 623.30 872.70 C625.43 872.30 627.57 872.50 629.70 872.10 C630.50 871.95 631.30 865.16 632.10 864.50 C633.07 863.70 634.03 863.93 635.00 863.30 C635.97 862.67 636.93 860.70 637.90 860.70 C639.47 860.70 641.03 874.13 642.60 874.40 C644.93 874.80 647.27 874.60 649.60 875.00 C650.60 875.17 651.60 883.80 652.60 883.80 C653.57 883.80 654.53 878.50 655.50 878.50 C656.47 878.50 657.43 885.00 658.40 885.00 C659.77 885.00 661.13 884.40 662.50 884.40 C665.07 884.40 667.63 885.00 670.20 885.00 C671.57 885.00 672.93 873.30 674.30 873.30 C675.90 873.30 677.50 876.80 679.10 876.80 C680.67 876.80 682.23 844.43 683.80 842.80 C684.57 842.00 685.33 841.60 686.10 841.60 C687.67 841.60 689.23 841.60 690.80 841.60 C692.17 841.60 693.53 831.25 694.90 831.10 C697.27 830.83 699.63 830.97 702.00 830.70 C702.97 830.59 703.93 822.30 704.90 822.30 C707.03 822.30 709.17 822.30 711.30 822.30 C712.10 822.30 712.90 835.20 713.70 835.20 C714.67 835.20 715.63 833.40 716.60 833.40 C717.57 833.40 718.53 834.77 719.50 837.50 C720.50 840.33 721.50 850.40 722.50 850.40 C723.47 850.40 724.43 847.80 725.40 847.80 C727.37 847.80 729.33 847.90 731.30 848.10 C733.03 848.28 734.77 850.40 736.50 850.40 C738.07 850.40 739.63 844.30 741.20 844.30 C742.57 844.30 743.93 846.67 745.30 846.90 C747.67 847.30 750.03 847.10 752.40 847.50 C754.13 847.79 755.87 859.20 757.60 859.20 C759.00 859.20 760.40 855.84 761.80 853.90 C763.33 851.77 764.87 846.90 766.40 846.90 C768.17 846.90 769.93 846.90 771.70 846.90 C773.87 846.90 776.03 839.30 778.20 839.30 C779.37 839.30 780.53 842.92 781.70 844.00 C782.67 844.90 783.63 844.57 784.60 845.70 C785.40 846.64 786.20 859.65 787.00 859.80 C789.13 860.20 791.27 860.00 793.40 860.40 C794.77 860.66 796.13 868.60 797.50 868.60 C798.87 868.60 800.23 866.80 801.60 866.80 C802.83 866.80 804.07 868.80 805.30 872.20 C806.07 874.31 806.83 880.34 807.60 880.40 C809.37 880.53 811.13 880.47 812.90 880.60 C814.07 880.69 815.23 882.20 816.40 882.20 C817.37 882.20 818.33 878.30 819.30 878.30 C821.07 878.30 822.83 889.20 824.60 889.20 C825.77 889.20 826.93 885.70 828.10 885.70 C830.07 885.70 832.03 885.70 834.00 885.70 C834.97 885.70 835.93 894.17 836.90 894.50 C838.07 894.90 839.23 894.70 840.40 895.10 C841.40 895.44 842.40 901.45 843.40 903.30 C844.37 905.09 845.33 904.73 846.30 906.20 C847.27 907.67 848.23 912.10 849.20 912.10 C850.97 912.10 852.73 912.10 854.50 912.10 C856.27 912.10 858.03 898.60 859.80 898.60 C860.97 898.60 862.13 921.40 863.30 921.40 C864.40 921.40 865.50 904.40 866.60 904.40 C867.47 904.40 868.33 915.21 869.20 915.30 C871.13 915.50 873.07 915.40 875.00 915.60 C876.97 915.80 878.93 926.10 880.90 926.10 C882.27 926.10 883.63 925.33 885.00 923.80 C886.57 922.04 888.13 886.90 889.70 886.90 C891.47 886.90 893.23 886.90 895.00 886.90 C896.17 886.90 897.33 881.60 898.50 881.60 C899.47 881.60 900.43 906.20 901.40 906.20 C902.57 906.20 903.73 902.10 904.90 902.10 C906.07 902.10 907.23 923.38 908.40 923.80 C910.97 924.73 913.53 924.27 916.10 925.20 C917.07 925.55 918.03 939.60 919.00 939.60 C921.00 939.60 923.00 935.57 925.00 930.80 C925.97 928.50 926.93 922.60 927.90 922.60 C928.90 922.60 929.90 929.60 930.90 929.60 C932.83 929.60 934.77 929.03 936.70 927.90 C937.87 927.22 939.03 919.10 940.20 919.10 C941.00 919.10 941.80 919.30 942.60 919.70 C944.17 920.48 945.73 925.50 947.30 925.50 C948.67 925.50 950.03 920.30 951.40 920.30 C953.33 920.30 955.27 920.30 957.20 920.30 C958.20 920.30 959.20 922.00 960.20 922.00 C961.17 922.00 962.13 920.90 963.10 920.90 C964.07 920.90 965.03 926.70 966.00 926.70 C966.80 926.70 967.60 925.50 968.40 925.50 C969.57 925.50 970.73 929.20 971.90 929.40 C973.87 929.73 975.83 929.57 977.80 929.90 C978.77 930.06 979.73 933.20 980.70 933.20 C982.63 933.20 984.57 903.30 986.50 903.30 C987.50 903.30 988.50 906.80 989.50 906.80 C990.47 906.80 991.43 894.59 992.40 894.50 C994.57 894.30 996.73 894.20 998.90 894.20 C999.67 894.20 1000.43 900.30 1001.20 900.30 C1002.37 900.30 1003.53 894.50 1004.70 894.50 C1006.33 894.50 1007.97 908.50 1009.60 908.50 C1010.70 908.50 1011.80 896.86 1012.90 896.60 C1014.87 896.13 1016.83 896.37 1018.80 895.90 C1019.57 895.72 1020.33 893.90 1021.10 893.90 C1023.47 893.90 1025.83 902.10 1028.20 902.10 C1029.17 902.10 1030.13 901.13 1031.10 899.20 C1031.87 897.67 1032.63 888.60 1033.40 888.60 C1035.37 888.60 1037.33 888.60 1039.30 888.60 C1041.07 888.60 1042.83 891.00 1044.60 891.00 C1046.60 891.00 1048.60 880.90 1050.60 880.90 C1051.53 880.90 1052.47 882.30 1053.40 882.30 C1055.77 882.30 1058.13 882.30 1060.50 882.30 C1062.13 882.30 1063.77 875.00 1065.40 875.00 C1066.57 875.00 1067.73 877.13 1068.90 878.10 C1070.30 879.26 1071.70 881.02 1073.10 881.30 C1075.47 881.77 1077.83 881.53 1080.20 882.00 C1081.13 882.18 1082.07 887.60 1083.00 887.60 C1083.93 887.60 1084.87 885.90 1085.80 885.90 C1087.90 885.90 1090.00 888.30 1092.10 888.30 C1093.03 888.30 1093.97 879.50 1094.90 879.50 C1097.73 879.50 1100.57 881.60 1103.40 881.60 C1104.10 881.60 1104.80 876.71 1105.50 876.70 C1110.67 876.63 1115.83 876.60 1121.00 876.60 C1121.80 876.60 1122.60 877.40 1123.40 877.80" fill="none" stroke="#b83db5" stroke-width="2.6" stroke-linejoin="round" stroke-linecap="round"/>
  <rect x="1124" y="573.8" width="101" height="24.6" rx="12.3" fill="#1f9469"/>
</svg>
<div id="title" class="t" style="left:26.00px;top:7.51px;font-size:35.00px;font-weight:400;color:#f2f2f6;letter-spacing:0.577px;-webkit-text-stroke:0.9px #f2f2f6;">QuantPro 300th</div>
<div id="author" class="t" style="left:104.60px;top:81.90px;font-size:17.00px;font-weight:400;color:#b2b2bc;letter-spacing:0.443px;-webkit-text-stroke:0.25px #b2b2bc;">Автор: <span style="color:#f7a21b;-webkit-text-stroke-color:#f7a21b">QuantPro</span></div>
<div id="subs" class="t" style="left:103.60px;top:111.61px;font-size:17.00px;font-weight:400;color:#b2b2bc;letter-spacing:0.621px;-webkit-text-stroke:0.25px #b2b2bc;">Подписчиков: <span style="color:#f7a21b;-webkit-text-stroke-color:#f7a21b">21</span></div>
<div id="btn" class="t" style="left:1105.20px;top:93.50px;font-size:19.00px;font-weight:400;color:#141414;letter-spacing:1.400px;-webkit-text-stroke:0.35px #141414;">Подключить</div>
<div id="l1" class="t" style="left:45.80px;top:177.10px;font-size:19.50px;font-weight:400;color:#aaabb5;letter-spacing:0.626px;-webkit-text-stroke:0.25px #aaabb5;">Среднегодовая доходность</div>
<div id="l2" class="t" style="left:368.00px;top:177.10px;font-size:19.50px;font-weight:400;color:#aaabb5;letter-spacing:0.712px;-webkit-text-stroke:0.25px #aaabb5;">Минимальная сумма</div>
<div id="l3" class="t" style="left:668.00px;top:177.10px;font-size:19.50px;font-weight:400;color:#aaabb5;letter-spacing:0.723px;-webkit-text-stroke:0.25px #aaabb5;">Прогнозируемая просадка</div>
<div id="l4" class="t" style="left:1023.20px;top:177.10px;font-size:19.50px;font-weight:400;color:#aaabb5;letter-spacing:0.700px;-webkit-text-stroke:0.25px #aaabb5;">Риск</div>
<div id="v1" class="t" style="left:45.80px;top:215.31px;font-size:20.00px;font-weight:400;color:#2aae73;letter-spacing:0.467px;-webkit-text-stroke:0.2px #2aae73;">36 %</div>
<div id="v2" class="t" style="left:369.00px;top:215.31px;font-size:20.00px;font-weight:400;color:#f4f4f6;letter-spacing:0.825px;-webkit-text-stroke:0.35px #f4f4f6;">500 000 ₽</div>
<div id="v3" class="t" style="left:668.00px;top:215.31px;font-size:20.00px;font-weight:400;color:#f4f4f6;letter-spacing:0.500px;-webkit-text-stroke:0.35px #f4f4f6;">-7 %</div>
<div id="v4" class="t" style="left:1023.20px;top:215.31px;font-size:20.00px;font-weight:400;color:#f4f4f6;letter-spacing:0.388px;-webkit-text-stroke:0.35px #f4f4f6;">Умеренный</div>
<div id="tab1" class="t" style="left:269.40px;top:305.01px;font-size:19.50px;font-weight:400;color:#f0f0f5;letter-spacing:0.510px;-webkit-text-stroke:0.6px #f0f0f5;">О стратегии</div>
<div id="tab2" class="t" style="left:894.40px;top:304.60px;font-size:19.50px;font-weight:400;color:#a6a7b2;letter-spacing:0.844px;-webkit-text-stroke:0.6px #a6a7b2;">Обсуждение</div>
<div id="p1" class="t" style="left:74.00px;top:414.31px;font-size:16.50px;font-weight:400;color:#f0f0f5;letter-spacing:1.625px;-webkit-text-stroke:0.6px #f0f0f5;">Месяц</div>
<div id="p2" class="t" style="left:181.20px;top:414.31px;font-size:16.50px;font-weight:400;color:#141414;letter-spacing:1.800px;-webkit-text-stroke:0.6px #141414;">Год</div>
<div id="p3" class="t" style="left:262.20px;top:414.50px;font-size:16.50px;font-weight:400;color:#f0f0f5;letter-spacing:1.210px;-webkit-text-stroke:0.6px #f0f0f5;">Весь период</div>
<div id="yld" class="t" style="left:515.00px;top:412.71px;font-size:19.00px;font-weight:400;color:#ececf0;letter-spacing:1.082px;-webkit-text-stroke:0.3px #ececf0;">Доходность в</div>
<div id="rub" class="t" style="left:669.60px;top:414.51px;font-size:17.00px;font-weight:400;color:#ececf0;letter-spacing:-0.750px;-webkit-text-stroke:0.2px #ececf0;">RUB</div>
<div id="cmp" class="t" style="left:54.80px;top:472.01px;font-size:17.00px;font-weight:400;color:#a9aab4;letter-spacing:0.556px;">Сравнить с</div>
<div id="c1" class="t" style="left:204.00px;top:471.70px;font-size:17.00px;font-weight:400;color:#b43fb1;letter-spacing:0.914px;">Индекс МосБиржи</div>
<div id="c2" class="t" style="left:414.00px;top:471.70px;font-size:17.00px;font-weight:400;color:#5fce5b;letter-spacing:0.542px;">Индекс S&amp;P500</div>
<div id="c3" class="t" style="left:598.40px;top:471.70px;font-size:17.00px;font-weight:400;color:#9b3cf0;letter-spacing:0.756px;">Индекс РТС</div>
<div id="y1" class="t" style="left:1134.00px;top:538.80px;font-size:19.50px;font-weight:400;color:#77777e;letter-spacing:0.040px;">50.81%</div>
<div id="y2" class="t" style="left:1134.00px;top:618.51px;font-size:19.50px;font-weight:400;color:#77777e;letter-spacing:1.450px;">38%</div>
<div id="y3" class="t" style="left:1134.00px;top:693.01px;font-size:19.50px;font-weight:400;color:#77777e;letter-spacing:0.000px;">26%</div>
<div id="y4" class="t" style="left:1134.00px;top:773.71px;font-size:19.50px;font-weight:400;color:#77777e;letter-spacing:-0.500px;">13%</div>
<div id="y5" class="t" style="left:1134.00px;top:853.71px;font-size:19.50px;font-weight:400;color:#77777e;letter-spacing:2.100px;">0%</div>
<div id="y6" class="t" style="left:1134.60px;top:931.41px;font-size:19.50px;font-weight:400;color:#77777e;letter-spacing:0.633px;">-12.43%</div>
<div id="pill" class="t" style="left:1131.20px;top:576.91px;font-size:17.50px;font-weight:400;color:#ffffff;letter-spacing:0.420px;-webkit-text-stroke:0.6px #ffffff;">44.87%</div>
<div id="x0" class="t" style="left:95.40px;top:971.90px;font-size:20.50px;font-weight:400;color:#77777e;letter-spacing:0.517px;">02.2025</div>
<div id="x1" class="t" style="left:177.40px;top:971.90px;font-size:20.50px;font-weight:400;color:#77777e;letter-spacing:0.517px;">03.2025</div>
<div id="x2" class="t" style="left:268.40px;top:971.90px;font-size:20.50px;font-weight:400;color:#77777e;letter-spacing:0.350px;">04.2025</div>
<div id="x3" class="t" style="left:355.80px;top:971.90px;font-size:20.50px;font-weight:400;color:#77777e;letter-spacing:0.517px;">05.2025</div>
<div id="x4" class="t" style="left:446.80px;top:971.90px;font-size:20.50px;font-weight:400;color:#77777e;letter-spacing:0.517px;">06.2025</div>
<div id="x5" class="t" style="left:534.60px;top:971.90px;font-size:20.50px;font-weight:400;color:#77777e;letter-spacing:0.517px;">07.2025</div>
<div id="x6" class="t" style="left:626.00px;top:971.90px;font-size:20.50px;font-weight:400;color:#77777e;letter-spacing:0.350px;">08.2025</div>
<div id="x7" class="t" style="left:716.60px;top:971.90px;font-size:20.50px;font-weight:400;color:#77777e;letter-spacing:0.517px;">09.2025</div>
<div id="x8" class="t" style="left:803.60px;top:971.90px;font-size:20.50px;font-weight:400;color:#77777e;letter-spacing:0.683px;">10.2025</div>
<div id="x9" class="t" style="left:894.80px;top:971.90px;font-size:20.50px;font-weight:400;color:#77777e;letter-spacing:0.850px;">11.2025</div>
<div id="x10" class="t" style="left:982.00px;top:971.90px;font-size:20.50px;font-weight:400;color:#77777e;letter-spacing:0.517px;">12.2025</div>
<div id="x11" class="t" style="left:1073.60px;top:971.90px;font-size:20.50px;font-weight:400;color:#77777e;letter-spacing:0.517px;">01.2026</div>
</body></html>
